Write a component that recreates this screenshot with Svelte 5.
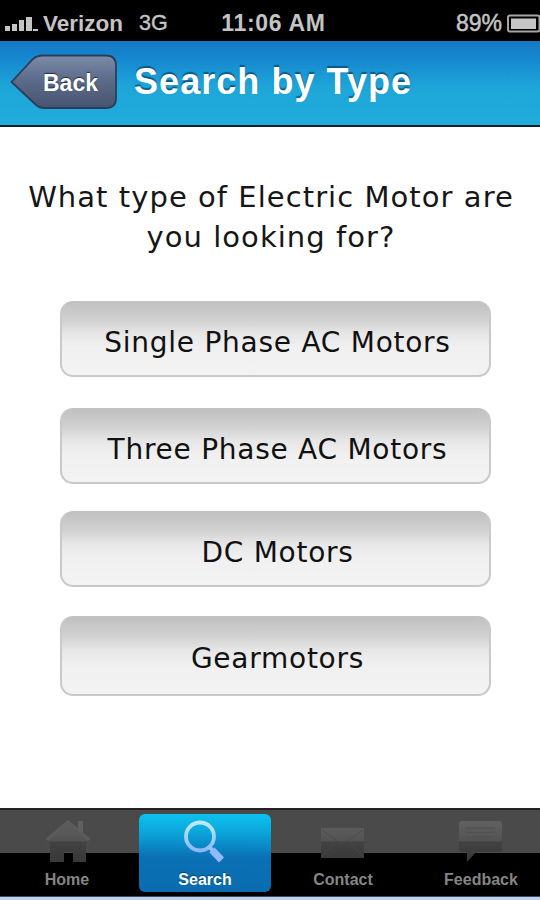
<script>
  const motorTypes = [
    { id: 'single', label: 'Single Phase AC Motors' },
    { id: 'three', label: 'Three Phase AC Motors' },
    { id: 'dc', label: 'DC Motors' },
    { id: 'gear', label: 'Gearmotors' }
  ];

  const tabs = [
    { id: 'home', label: 'Home' },
    { id: 'search', label: 'Search' },
    { id: 'contact', label: 'Contact' },
    { id: 'feedback', label: 'Feedback' }
  ];

  let activeTab = $state('search');
</script>

<div class="screen">
  <div class="status-bar">
    <div class="carrier">
      <svg class="signal" width="35" height="16" viewBox="0 0 35 16" fill="#c4c4c4">
        <rect x="1" y="10" width="5" height="5" />
        <rect x="8" y="8" width="5" height="7" />
        <rect x="15" y="4" width="5" height="11" />
        <rect x="22" y="1" width="6" height="14" />
        <rect x="29" y="13" width="5" height="2" />
      </svg>
      <span class="carrier-name">Verizon</span>
      <span class="network">3G</span>
    </div>
    <span class="clock">11:06 AM</span>
    <div class="power">
      <span class="percent">89%</span>
      <svg class="battery" width="33" height="20" viewBox="0 0 33 20">
        <rect x="1" y="1.5" width="31.5" height="16" rx="2" fill="none" stroke="#a5a5a5" stroke-width="2" />
        <rect x="4" y="4.5" width="25" height="10.5" fill="#c6c6c6" />
      </svg>
    </div>
  </div>

  <header>
    <button class="back" aria-label="Back">
      <svg class="back-shape" width="108" height="57" viewBox="0 0 108 57">
        <defs>
          <linearGradient id="backFill" x1="0" y1="0" x2="0" y2="1">
            <stop offset="0" stop-color="#7b8ba8" />
            <stop offset="0.45" stop-color="#5d6c8a" />
            <stop offset="1" stop-color="#47546f" />
          </linearGradient>
        </defs>
        <path
          d="M1.5 28 L23 5 Q27 1.5 32 1.5 H96 Q106 1.5 106 11.5 V44 Q106 54 96 54 H34 Q29 54 25 50 Z"
          fill="url(#backFill)"
          stroke="#2b3e59"
          stroke-width="1.8"
        />
      </svg>
      <span>Back</span>
    </button>
    <h1>Search by Type</h1>
  </header>

  <main>
    <h2>What type of Electric Motor are<br />you looking for?</h2>
    <div class="choices">
      {#each motorTypes as type (type.id)}
        <button class="choice {type.id}"><span>{type.label}</span></button>
      {/each}
    </div>
  </main>

  <nav>
    {#each tabs as tab (tab.id)}
      <button class="tab" class:active={activeTab === tab.id} onclick={() => (activeTab = tab.id)}>
        <svg width="50" height="50" viewBox="0 0 50 50">
          <defs>
            <linearGradient id="tabIcon" gradientUnits="userSpaceOnUse" x1="0" y1="5" x2="0" y2="48">
              <stop offset="0" stop-color="#626262" />
              <stop offset="0.5" stop-color="#535353" />
              <stop offset="0.54" stop-color="#424242" />
              <stop offset="1" stop-color="#383838" />
            </linearGradient>
            <linearGradient id="lensIcon" x1="0" y1="0" x2="0" y2="1">
              <stop offset="0" stop-color="#bdeaff" />
              <stop offset="1" stop-color="#8db8f7" />
            </linearGradient>
          </defs>
          {#if tab.id === 'home'}
            <path d="M8 26 L26 10 L44 26 V48 H31 V38 H22 V48 H8 Z" fill="url(#tabIcon)" />
            <path d="M36 7 H41 V20 L36 15 Z" fill="#606060" />
            <path d="M5 26 L26 8 L47 26" fill="none" stroke="#5c5c5c" stroke-width="3.5" />
          {:else if tab.id === 'search'}
            <circle cx="20" cy="22.5" r="14" fill="none" stroke="url(#lensIcon)" stroke-width="3.8" />
            <path d="M29.5 33 L33 37" stroke="#98c2f7" stroke-width="4" />
            <path d="M32 36 L41.5 46" stroke="#94b9fa" stroke-width="7" />
          {:else if tab.id === 'contact'}
            <rect x="3" y="14" width="43" height="30" fill="url(#tabIcon)" />
            <path d="M4 16 L24 30 L45 16 M4 43 L18 27 M45 43 L31 27" fill="none" stroke="#484848" stroke-width="0.8" />
          {:else}
            <path
              d="M6 7 H42 Q46 7 46 11 V35 Q46 38 43 38 H20 L11 48 V38 H6 Q3 38 3 35 V11 Q3 7 6 7 Z"
              fill="url(#tabIcon)"
            />
            <path d="M10 14 H39 M10 18.5 H39 M10 23 H36" stroke="#505050" stroke-width="1" />
          {/if}
        </svg>
        <span>{tab.label}</span>
      </button>
    {/each}
  </nav>
  <div class="bottom-strip"></div>
</div>

<style>
  :global(body) {
    margin: 0;
    background: #fff;
  }

  .screen {
    display: flex;
    flex-direction: column;
    width: 540px;
    height: 900px;
    overflow: hidden;
    background: #fff;
    font-family: "Liberation Sans", Arial, sans-serif;
  }

  button {
    padding: 0;
    border: none;
    background: none;
    font-family: inherit;
    cursor: pointer;
  }

  .status-bar {
    display: grid;
    grid-template-columns: 200px 1fr 200px;
    align-items: center;
    flex: none;
    height: 41px;
    padding-top: 6px;
    box-sizing: border-box;
    background: #000;
    color: #c4c4c4;
    font-size: 23px;
    font-weight: 700;
    white-space: nowrap;
  }

  .carrier,
  .power {
    display: flex;
    align-items: center;
  }

  .signal {
    margin: 1px 4px 0 4px;
  }

  .carrier-name {
    width: 96px;
    font-size: 22.5px;
  }

  .network {
    font-weight: 400;
    font-size: 21.5px;
    -webkit-text-stroke: 0.4px #c4c4c4;
  }

  .clock {
    text-align: center;
    padding-left: 7px;
    letter-spacing: 0.7px;
  }

  .power {
    justify-content: flex-end;
  }

  .percent {
    font-weight: 400;
    -webkit-text-stroke: 0.5px #c4c4c4;
    margin-right: 5px;
  }

  .battery {
    display: block;
  }

  header {
    display: flex;
    flex: none;
    height: 86px;
    box-sizing: border-box;
    padding: 13px 0 0 10px;
    background: linear-gradient(#1479c6 0%, #168bd0 25%, #1ea6d9 55%, #20acdc 100%);
    border-bottom: 2px solid #06202d;
  }

  .back {
    position: relative;
    width: 108px;
    height: 57px;
    color: #fff;
    font-size: 23px;
    font-weight: 700;
    text-shadow: 0 -1px 1px #202c40;
  }

  .back-shape {
    position: absolute;
    inset: 0;
  }

  .back span {
    position: relative;
    top: 1px;
    padding-left: 13px;
  }

  h1 {
    margin: 7px 0 0 16px;
    color: #fff;
    font-size: 36px;
    line-height: 41px;
    letter-spacing: 1.05px;
    white-space: nowrap;
    text-shadow: 0 -2px 1px rgba(12, 62, 100, 0.7);
  }

  main {
    flex: 1;
    font-family: Verdana, "DejaVu Sans", sans-serif;
    color: #161616;
  }

  h2 {
    margin: 50px 0 0;
    padding-left: 2px;
    font-size: 29px;
    font-weight: 400;
    line-height: 40px;
    letter-spacing: 1.05px;
    text-align: center;
    white-space: nowrap;
  }

  .choices {
    display: flex;
    flex-direction: column;
    padding: 44px 49px 0 60px;
  }

  .choice {
    height: 76px;
    margin-bottom: 31px;
    border: 2px solid #c9c9c9;
    border-top-color: #c2c2c2;
    border-radius: 13px;
    background: linear-gradient(#c1c1c1 0%, #d2d2d2 25%, #e6e6e6 42%, #f0f0f0 62%, #f3f3f3 100%);
    color: #111;
    font-size: 28px;
    letter-spacing: 0.74px;
    white-space: nowrap;
  }

  .choice span {
    position: relative;
    top: 3px;
    left: 2px;
  }

  .choice.three {
    margin-bottom: 27px;
  }

  .choice.dc {
    margin-bottom: 29px;
  }

  .choice.gear {
    height: 80px;
    margin-bottom: 0;
  }

  .choice.gear span {
    top: 2px;
  }

  nav {
    display: flex;
    gap: 6px;
    flex: none;
    height: 88px;
    box-sizing: border-box;
    padding: 4px 0 2px 1px;
    border-top: 2px solid #222;
    background: linear-gradient(#4a4a4a 43px, #000 43px);
  }

  .tab {
    display: flex;
    flex-direction: column;
    align-items: center;
    flex: none;
    width: 132px;
    height: 78px;
    border-radius: 6px;
    color: #858585;
    font-size: 16px;
    font-weight: 700;
  }

  .tab svg {
    display: block;
  }

  .tab span {
    margin-top: 6px;
    line-height: 19px;
  }

  .tab.active {
    color: #fff;
    background: linear-gradient(#0cc2ee 0%, #0ba5da 24%, #0a70b4 56%, #0a6db0 100%);
    text-shadow: 0 -1px 1px #07406d;
  }

  .bottom-strip {
    flex: none;
    height: 4px;
    background: #c3d2ec;
    border-top: 1px solid #35506f;
    box-sizing: border-box;
  }
</style>
